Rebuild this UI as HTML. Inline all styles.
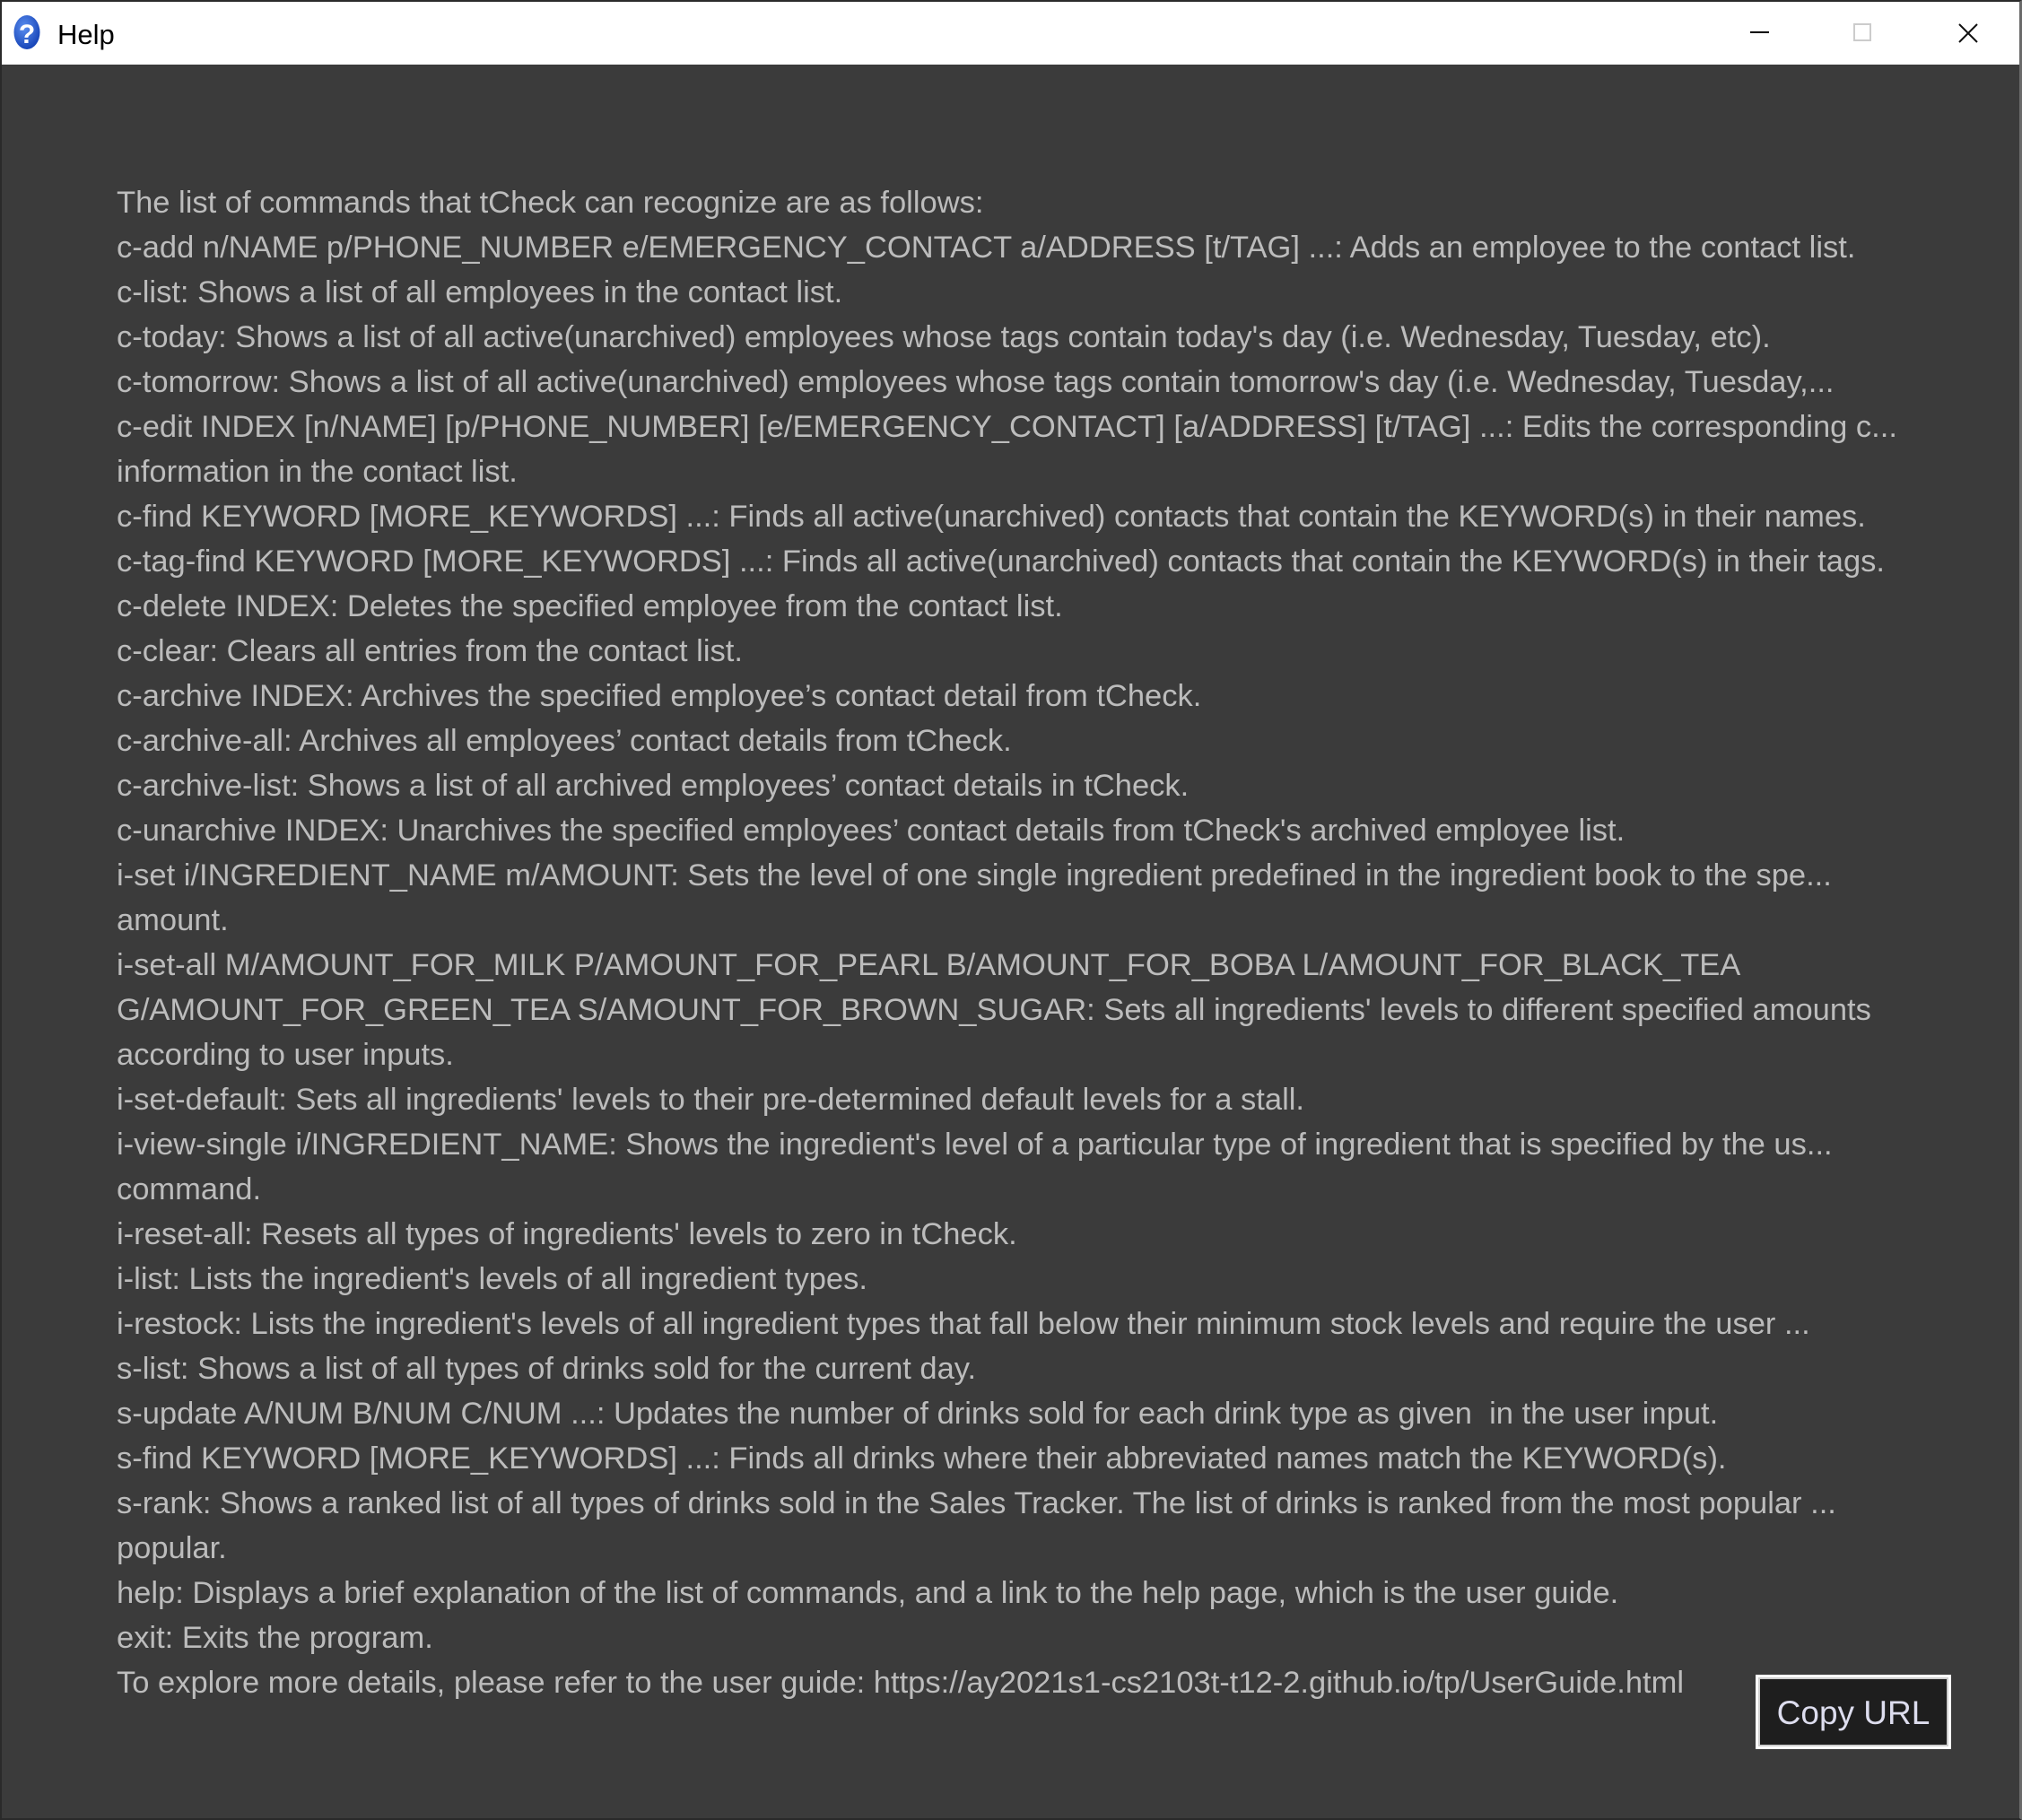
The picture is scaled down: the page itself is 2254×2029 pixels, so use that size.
<!DOCTYPE html>
<html><head><meta charset="utf-8"><style>
html,body{margin:0;padding:0;}
body{width:2254px;height:2029px;background:#3b3b3b;position:relative;overflow:hidden;font-family:"Liberation Sans",sans-serif;}
.frame{position:absolute;left:0;top:0;width:2254px;height:2029px;box-sizing:border-box;border:2px solid #2a2a2a;border-right:3px solid #6a6a6a;}
.title{position:absolute;left:2px;top:2px;width:2249px;height:70px;background:#fff;}
.title .t{position:absolute;left:62px;top:19px;font-size:31px;color:#000;}
.txt{position:absolute;left:130px;top:201px;width:1990px;font-size:34.5px;line-height:50px;color:#bcbcbc;white-space:nowrap;}
.txt div{overflow:hidden;}
.btn{position:absolute;left:1957px;top:1867px;width:218px;height:83px;box-sizing:border-box;background:#fff;padding:3px;}
.btn .i{width:100%;height:100%;box-sizing:border-box;border:2px solid #cfcfcf;background:#1e1e1e;color:#dde;font-size:37px;text-align:center;line-height:76px;}
</style></head><body>
<div class="frame"></div>
<div class="title">
<svg style="position:absolute;left:13px;top:14px" width="30" height="40" viewBox="0 0 30 40"><defs><radialGradient id="g" cx="40%" cy="35%" r="65%"><stop offset="0" stop-color="#5a8ef0"/><stop offset="1" stop-color="#1846b8"/></radialGradient></defs><ellipse cx="15" cy="20" rx="14.5" ry="19" fill="url(#g)"/><text x="15" y="32" text-anchor="middle" font-family="Liberation Sans" font-weight="bold" font-size="30" fill="#fff">?</text></svg>
<div class="t">Help</div>
<div style="position:absolute;left:1949px;top:33px;width:21px;height:2px;background:#000"></div>
<div style="position:absolute;left:2064px;top:24px;width:20px;height:20px;box-sizing:border-box;border:2px solid #ccc"></div>
<svg style="position:absolute;left:2181px;top:24px" width="22" height="22"><path d="M1 1L21 21M21 1L1 21" stroke="#111" stroke-width="2"/></svg>
</div>
<div class="txt">
<div>The list of commands that tCheck can recognize are as follows:</div>
<div>c-add n/NAME p/PHONE_NUMBER e/EMERGENCY_CONTACT a/ADDRESS [t/TAG] ...: Adds an employee to the contact list.</div>
<div>c-list: Shows a list of all employees in the contact list.</div>
<div>c-today: Shows a list of all active(unarchived) employees whose tags contain today's day (i.e. Wednesday, Tuesday, etc).</div>
<div>c-tomorrow: Shows a list of all active(unarchived) employees whose tags contain tomorrow's day (i.e. Wednesday, Tuesday,...</div>
<div>c-edit INDEX [n/NAME] [p/PHONE_NUMBER] [e/EMERGENCY_CONTACT] [a/ADDRESS] [t/TAG] ...: Edits the corresponding c...</div>
<div>information in the contact list.</div>
<div>c-find KEYWORD [MORE_KEYWORDS] ...: Finds all active(unarchived) contacts that contain the KEYWORD(s) in their names.</div>
<div>c-tag-find KEYWORD [MORE_KEYWORDS] ...: Finds all active(unarchived) contacts that contain the KEYWORD(s) in their tags.</div>
<div>c-delete INDEX: Deletes the specified employee from the contact list.</div>
<div>c-clear: Clears all entries from the contact list.</div>
<div>c-archive INDEX: Archives the specified employee’s contact detail from tCheck.</div>
<div>c-archive-all: Archives all employees’ contact details from tCheck.</div>
<div>c-archive-list: Shows a list of all archived employees’ contact details in tCheck.</div>
<div>c-unarchive INDEX: Unarchives the specified employees’ contact details from tCheck's archived employee list.</div>
<div>i-set i/INGREDIENT_NAME m/AMOUNT: Sets the level of one single ingredient predefined in the ingredient book to the spe...</div>
<div>amount.</div>
<div>i-set-all M/AMOUNT_FOR_MILK P/AMOUNT_FOR_PEARL B/AMOUNT_FOR_BOBA L/AMOUNT_FOR_BLACK_TEA</div>
<div>G/AMOUNT_FOR_GREEN_TEA S/AMOUNT_FOR_BROWN_SUGAR: Sets all ingredients' levels to different specified amounts</div>
<div>according to user inputs.</div>
<div>i-set-default: Sets all ingredients' levels to their pre-determined default levels for a stall.</div>
<div>i-view-single i/INGREDIENT_NAME: Shows the ingredient's level of a particular type of ingredient that is specified by the us...</div>
<div>command.</div>
<div>i-reset-all: Resets all types of ingredients' levels to zero in tCheck.</div>
<div>i-list: Lists the ingredient's levels of all ingredient types.</div>
<div>i-restock: Lists the ingredient's levels of all ingredient types that fall below their minimum stock levels and require the user ...</div>
<div>s-list: Shows a list of all types of drinks sold for the current day.</div>
<div>s-update A/NUM B/NUM C/NUM ...: Updates the number of drinks sold for each drink type as given &nbsp;in the user input.</div>
<div>s-find KEYWORD [MORE_KEYWORDS] ...: Finds all drinks where their abbreviated names match the KEYWORD(s).</div>
<div>s-rank: Shows a ranked list of all types of drinks sold in the Sales Tracker. The list of drinks is ranked from the most popular ...</div>
<div>popular.</div>
<div>help: Displays a brief explanation of the list of commands, and a link to the help page, which is the user guide.</div>
<div>exit: Exits the program.</div>
<div>To explore more details, please refer to the user guide: https://ay2021s1-cs2103t-t12-2.github.io/tp/UserGuide.html</div>
</div>
<div class="btn"><div class="i">Copy URL</div></div>
</body></html>
